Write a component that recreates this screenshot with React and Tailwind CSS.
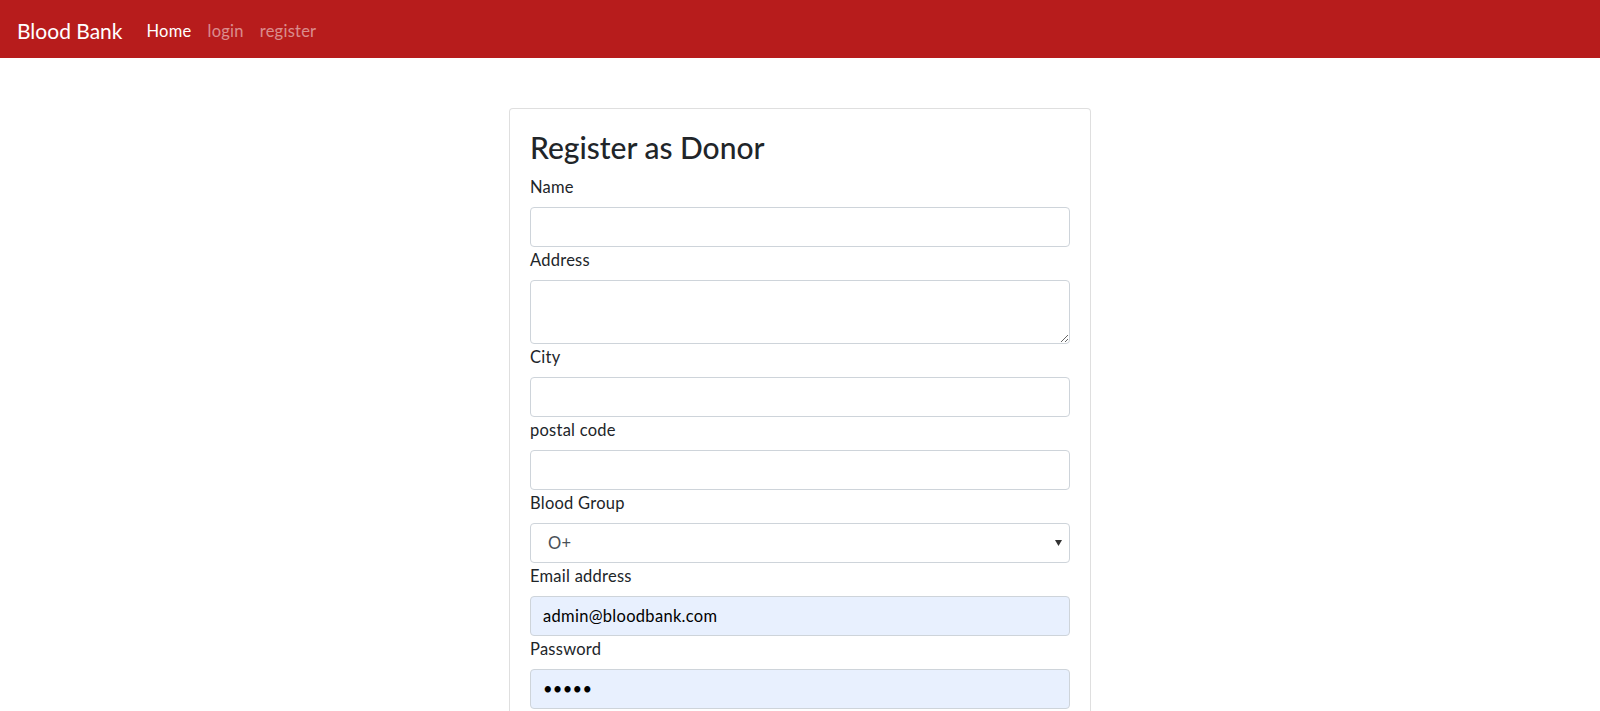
import React from "react";

const font = { fontFamily: "Lato, 'Open Sans', sans-serif" };

function Field({ label, children }) {
    return (
        <div className="mt-[1px]">
            <label className="block text-[16.5px] tracking-[0.25px] leading-6 mb-2 text-[#212529]">{label}</label>
            {children}
        </div>
    );
}

const inputCls =
    "block w-full h-[40px] px-3 text-[16.5px] tracking-[0.25px] text-[#495057] bg-white border border-[#ced4da] rounded-[4px] outline-none";

const autofillCls =
    "block w-full h-[40px] px-3 text-[16.5px] tracking-[0.3px] text-black bg-[#e8f0fe] border border-[#ced4da] rounded-[4px] outline-none";

export default function App() {
    return (
        <div className="min-h-screen bg-white" style={font}>
            {/* Navbar */}
            <nav className="h-[58px] bg-[#b71c1c] flex items-center pl-[17px] pr-4 pt-[4px]">
                <a href="#" className="text-white text-[21px] leading-[30px] mr-4">
                    Blood Bank
                </a>
                <div className="flex items-center text-[16.5px] tracking-[0.25px] leading-6">
                    <a href="#" className="px-2 text-white">Home</a>
                    <a href="#" className="px-2 text-white/50">login</a>
                    <a href="#" className="px-2 text-white/50">register</a>
                </div>
            </nav>

            {/* Register card */}
            <div className="pt-[50px] pb-12">
                <div className="w-[582px] mx-auto border border-black/[0.125] rounded-[4px] bg-white">
                    <div className="p-5">
                        <h2 className="text-[30px] leading-[36px] font-medium text-[#212529] mb-[10px]">
                            Register as Donor
                        </h2>
                        <form onSubmit={(e) => e.preventDefault()}>
                            <Field label="Name">
                                <input type="text" className={inputCls} />
                            </Field>
                            <Field label="Address">
                                <textarea rows={2} className="block w-full h-[64px] px-3 py-1.5 text-[16.5px] text-[#495057] bg-white border border-[#ced4da] rounded-[4px] outline-none resize" />
                            </Field>
                            <Field label="City">
                                <input type="text" className={inputCls} />
                            </Field>
                            <Field label="postal code">
                                <input type="text" className={inputCls} />
                            </Field>
                            <Field label="Blood Group">
                                <div className="relative">
                                    <select className={inputCls + " appearance-none pl-[17px]"} defaultValue="O+">
                                        <option>O+</option>
                                        <option>O-</option>
                                        <option>A+</option>
                                        <option>A-</option>
                                        <option>B+</option>
                                        <option>B-</option>
                                        <option>AB+</option>
                                        <option>AB-</option>
                                    </select>
                                    <svg className="absolute right-[8px] top-[17px] pointer-events-none" width="7" height="6" viewBox="0 0 7 6">
                                        <path d="M0 0h7L3.5 6z" fill="#333" />
                                    </svg>
                                </div>
                            </Field>
                            <Field label="Email address">
                                <input type="email" className={autofillCls} defaultValue="admin@bloodbank.com" />
                            </Field>
                            <Field label="Password">
                                <input type="password" className={autofillCls} defaultValue="admin" />
                            </Field>
                        </form>
                    </div>
                </div>
            </div>
        </div>
    );
}
